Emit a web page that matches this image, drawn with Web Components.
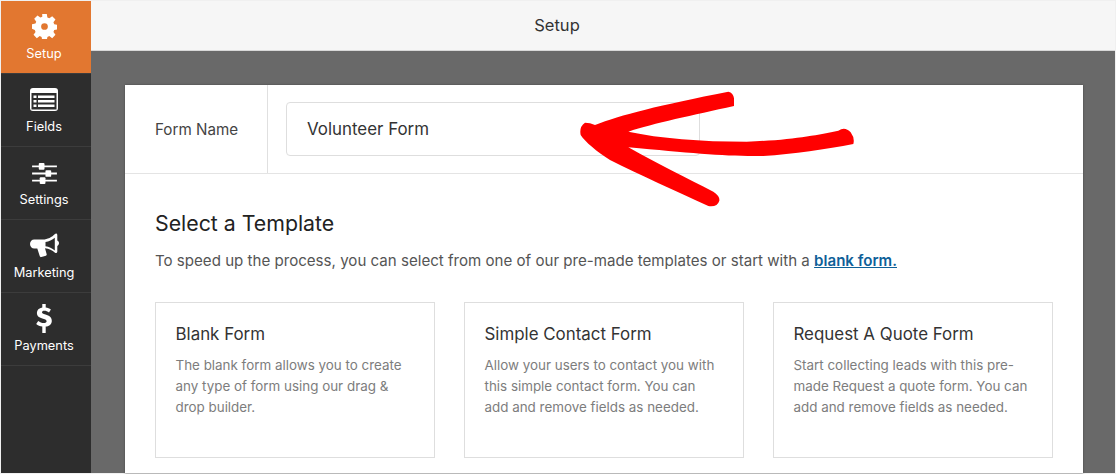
<!DOCTYPE html>
<html>
<head>
<meta charset="utf-8">
<title>Setup</title>
<style>
    html, body { margin: 0; height: 100%; overflow: hidden; background: #fff; }
    body { font-family: Inter, "Liberation Sans", sans-serif; }
</style>
</head>
<body>
<builder-app>
    <builder-nav slot="nav">
        <nav-item label="Setup" icon="gear" active></nav-item>
        <nav-item label="Fields" icon="list"></nav-item>
        <nav-item label="Settings" icon="sliders"></nav-item>
        <nav-item label="Marketing" icon="horn"></nav-item>
        <nav-item label="Payments" icon="dollar"></nav-item>
    </builder-nav>
    <setup-panel>
        <template-card title="Blank Form">The blank form allows you to create any type of form using our drag &amp; drop builder.</template-card>
        <template-card title="Simple Contact Form">Allow your users to contact you with this simple contact form. You can add and remove fields as needed.</template-card>
        <template-card title="Request A Quote Form">Start collecting leads with this pre-made Request a quote form. You can add and remove fields as needed.</template-card>
    </setup-panel>
</builder-app>

<script>
// 图标
const ICONS = {
    gear: `<svg width="25" height="25" viewBox="0 0 26 26"><path fill="#fff" fill-rule="evenodd" d="M10.6 0h4.800l.6 3.600 2 .8 3-2.100 3.400 3.400-2.100 3 .8 2 3.600.6v4.800l-3.600.6-.8 2 2.100 3-3.400 3.400-3-2.100-2 .8-.6 3.600h-4.800l-.6-3.600-2-.8-3 2.100-3.400-3.400 2.100-3-.8-2L0 15.400v-4.800l3.600-.6.8-2-2.100-3 3.400-3.400 3 2.100 2-.8zM13 9.500a3.500 3.500 0 1 0 0 7 3.500 3.500 0 0 0 0-7z"/></svg>`,
    list: `<svg width="28" height="23" viewBox="0 0 28 23"><rect width="28" height="23" rx="3" fill="#fff"/><rect x="1.500" y="5" width="25" height="16.500" fill="#2d2d2d"/><path fill="#fff" d="M3.500 7.500h3v2.500h-3zM8 7.500h16.500v2.500H8zM3.500 12h3v2.500h-3zM8 12h16.500v2.500H8zM3.500 16.500h3V19h-3zM8 16.500h16.500V19H8z"/></svg>`,
    sliders: `<svg width="25" height="21" viewBox="0 0 26 22" fill="#fff" style="margin-top:3px"><path d="M0 2.500h26v2H0zM0 10h26v2H0zM0 17.500h26v2H0z"/><rect x="7" y="0" width="6" height="7" rx="1"/><rect x="14" y="7.500" width="6" height="7" rx="1"/><rect x="8" y="15" width="6" height="7" rx="1"/></svg>`,
    horn: `<svg width="29" height="25" viewBox="0 0 29 25"><path fill="#fff" fill-rule="evenodd" d="M26 .5c.8 0 1.300.7 1.300 1.500v5.600c1 .5 1.700 1.500 1.700 2.700s-.7 2.200-1.700 2.700v5.600c0 .8-.5 1.500-1.300 1.500-.4 0-.7-.1-1-.4-2.600-2.400-6-4-10-4.500l1.700 6c.2.700-.2 1.300-.8 1.500l-4.600 1.400c-.7.200-1.300-.2-1.500-.8L7.300 15.500H4.200C1.900 15.500 0 13.400 0 11c0-2.500 1.900-4.500 4.200-4.500H13C17.500 6.500 22 4 25 1c.3-.3.600-.5 1-.5zM24.800 4.700c-2.600 2.300-5.900 3.900-9.300 4.300v4.300c3.400.4 6.700 2 9.300 4.300z"/></svg>`,
    dollar: `<svg width="16" height="29" viewBox="0 0 16 29"><path fill="#fff" d="M6.300 0h3.400v3.400c2 .2 3.800 1 5.200 2l-1.900 3c-1.500-1-3-1.600-4.700-1.600-1.500 0-2.300.6-2.300 1.500 0 1.100 1 1.500 3.500 2.300 3.800 1.200 6.300 2.600 6.300 6.300 0 3-2.100 5.200-6.100 5.700V29H6.300v-6.400c-2.300-.3-4.500-1.300-6.100-2.600l2-3c1.700 1.300 3.600 2.100 5.600 2.100 1.800 0 2.800-.7 2.800-1.800 0-1.200-1-1.700-3.500-2.500C3.200 13.700.9 12.300.9 8.800.9 6 2.900 3.900 6.300 3.400z"/></svg>`
};

class BuilderApp extends HTMLElement {
    constructor() {
        super();
        this.attachShadow({ mode: 'open' });
        this.shadowRoot.innerHTML = `
            <style>
                :host {
                    display: grid;
                    grid-template-columns: 90px 1fr;
                    width: 1116px;
                    height: 474px;
                    overflow: hidden;
                    box-sizing: border-box;
                    padding: 1px;
                    background: #f0f0f0;
                }
                .main { display: flex; flex-direction: column; min-width: 0; min-height: 0; }
                .bar {
                    height: 50px;
                    flex: none;
                    box-sizing: border-box;
                    display: flex;
                    align-items: center;
                    justify-content: center;
                    padding: 0 92px 2px 0;
                    background: #f6f6f6;
                    border-bottom: 1px solid #d8d8d8;
                    color: #333;
                    font-size: 16.500px;
                }
                .stage {
                    flex: 1;
                    display: grid;
                    background: #696969;
                    padding: 34px 32px 0 34px;
                    min-height: 0;
                }
            </style>
            <slot name="nav"></slot>
            <div class="main">
                <div class="bar">Setup</div>
                <div class="stage"><slot></slot></div>
            </div>
        `;
    }
}

class BuilderNav extends HTMLElement {
    constructor() {
        super();
        this.attachShadow({ mode: 'open' });
        this.shadowRoot.innerHTML = `
            <style>
                :host {
                    display: flex;
                    flex-direction: column;
                    width: 90px;
                    background: #2d2d2d;
                }
            </style>
            <slot></slot>
        `;
    }
}

class NavItem extends HTMLElement {
    constructor() {
        super();
        this.attachShadow({ mode: 'open' });
    }

    connectedCallback() {
        const label = this.getAttribute('label');
        const icon = ICONS[this.getAttribute('icon')];
        this.shadowRoot.innerHTML = `
            <style>
                :host {
                    display: flex;
                    flex-direction: column;
                    align-items: center;
                    box-sizing: border-box;
                    height: 73px;
                    padding: 5px 4px 0 0;
                    border-bottom: 1px solid #3c3c3c;
                    color: #fff;
                    font-size: 12.800px;
                }
                :host([active]) { background: #e27730; }
                .icon { height: 40px; display: flex; align-items: center; justify-content: center; }
                .label { line-height: 16px; }
            </style>
            <div class="icon">${icon}</div>
            <div class="label">${label}</div>
        `;
    }
}

class SetupPanel extends HTMLElement {
    constructor() {
        super();
        this.attachShadow({ mode: 'open' });
        this.shadowRoot.innerHTML = `
            <style>
                :host {
                    display: block;
                    position: relative;
                    background: #fff;
                    box-shadow: 0 0 2px #444;
                    min-height: 0;
                }
                .name-row {
                    display: flex;
                    height: 89px;
                    box-sizing: border-box;
                    border-bottom: 1px solid #e4e4e4;
                }
                .name-label {
                    width: 143px;
                    box-sizing: border-box;
                    padding-left: 30px;
                    display: flex;
                    align-items: center;
                    border-right: 1px solid #e0e0e0;
                    color: #444;
                    font-size: 15.200px;
                }
                .name-field { padding: 17px 0 0 18px; }
                .input {
                    width: 414px;
                    height: 54px;
                    box-sizing: border-box;
                    border: 1px solid #dedede;
                    border-radius: 4px;
                    padding-left: 20px;
                    display: flex;
                    align-items: center;
                    color: #333;
                    font-size: 16.900px;
                }
                .body { padding: 36px 30px 0 30px; }
                h2 {
                    margin: 0;
                    font-weight: 400;
                    font-size: 21.300px;
                    line-height: 26px;
                    color: #222;
                }
                p {
                    margin: 14px 0 0;
                    font-size: 15.100px;
                    line-height: 22px;
                    color: #555;
                }
                a { color: #0e6098; font-weight: 600; text-decoration: underline; }
                .cards {
                    display: grid;
                    grid-template-columns: repeat(3, 280px);
                    column-gap: 29px;
                    margin-top: 30px;
                }
                .arrow { position: absolute; left: 435px; top: -15px; pointer-events: none; }
            </style>
            <div class="name-row">
                <div class="name-label">Form Name</div>
                <div class="name-field"><div class="input">Volunteer Form</div></div>
            </div>
            <div class="body">
                <h2>Select a Template</h2>
                <p>To speed up the process, you can select from one of our pre-made templates or start with a <a>blank form.</a></p>
                <div class="cards"><slot></slot></div>
            </div>
            <svg class="arrow" width="320" height="150" viewBox="0 0 960 450" fill="#f00">
                <path d="M75 158 Q90 158 105 165 C180 135 300 105 505 65 Q520 68 522 85 L522 108 C400 135 280 160 205 185 C300 205 420 215 560 215 C700 210 770 195 835 182 Q855 168 872 187 Q885 205 880 222 C800 238 700 252 610 258 C500 260 400 250 205 232 C300 285 380 325 460 365 Q480 378 478 392 Q472 412 445 408 C350 365 240 315 150 270 C110 245 75 215 62 195 Q57 170 75 158Z"/>
            </svg>
        `;
    }
}

class TemplateCard extends HTMLElement {
    constructor() {
        super();
        this.attachShadow({ mode: 'open' });
    }

    connectedCallback() {
        this.shadowRoot.innerHTML = `
            <style>
                :host {
                    display: block;
                    height: 156px;
                    box-sizing: border-box;
                    border: 1px solid #dedede;
                    padding: 19px 20px 0 19.500px;
                }
                .title { font-size: 16.900px; line-height: 24px; color: #333; }
                .desc { margin-top: 9px; font-size: 13.400px; line-height: 21px; color: #7d7d7d; }
            </style>
            <div class="title">${this.getAttribute('title')}</div>
            <div class="desc"><slot></slot></div>
        `;
    }
}

customElements.define('builder-app', BuilderApp);
customElements.define('builder-nav', BuilderNav);
customElements.define('nav-item', NavItem);
customElements.define('setup-panel', SetupPanel);
customElements.define('template-card', TemplateCard);
</script>
</body>
</html>
